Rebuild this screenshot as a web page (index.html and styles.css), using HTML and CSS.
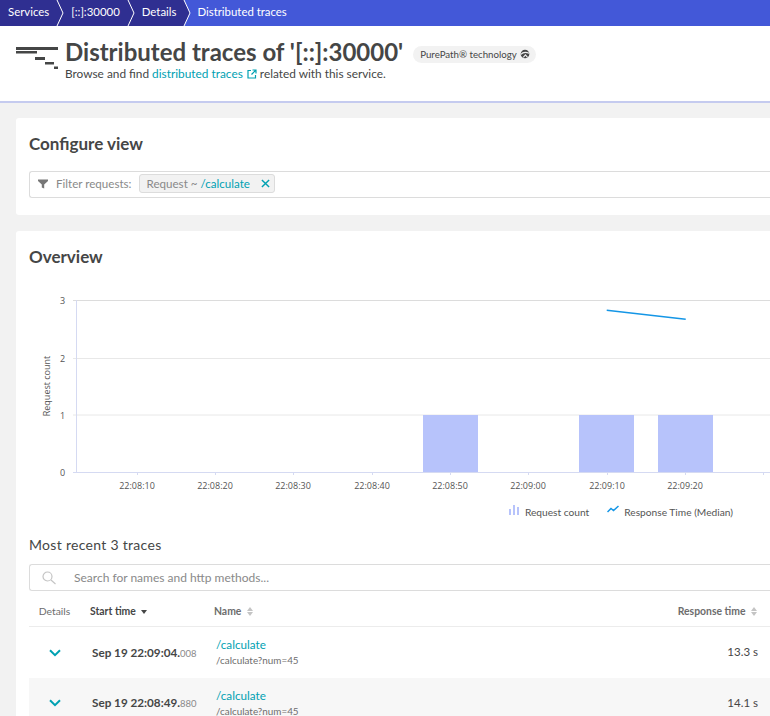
FILE: index.html
```html
<!DOCTYPE html>
<html lang="en">
<head>
    <meta charset="UTF-8">
    <title>Distributed traces</title>
    <link rel="stylesheet" href="styles.css">
</head>
<body>
<nav class="crumbs">
    <a class="crumb">Services</a>
    <svg class="crumb-sep" viewBox="0 0 14 26"><path d="M4 0 L10 13 L4 26" /></svg>
    <a class="crumb">[::]:30000</a>
    <svg class="crumb-sep" viewBox="0 0 14 26"><path d="M4 0 L10 13 L4 26" /></svg>
    <a class="crumb">Details</a>
    <svg class="crumb-sep crumb-sep-last" viewBox="0 0 14 26"><polygon class="crumb-fill" points="4,0 14,0 14,26 4,26 10,13" /><path d="M4 0 L10 13 L4 26" /></svg>
    <a class="crumb crumb-current">Distributed traces</a>
</nav>

<header class="page-head">
    <svg class="page-icon" viewBox="0 0 43 24">
        <rect x="0" y="1" width="42" height="3" />
        <rect x="0" y="5" width="21" height="2.5" />
        <rect x="19" y="11" width="10" height="3" />
        <rect x="29" y="16" width="9" height="2.5" />
        <rect x="38" y="20.5" width="4" height="2.5" />
    </svg>
    <div class="page-titles">
        <div class="title-row">
            <h1>Distributed traces of '[::]:30000'</h1>
            <span class="pill">PurePath® technology
                <svg class="pill-icon" viewBox="0 0 12 12"><circle cx="6" cy="6" r="5.2" /><path class="pill-cut" d="M1 6.5 C3.5 3.5 7 3.5 11 5 M4 10 L6.5 7 L9 10" /></svg>
            </span>
        </div>
        <p class="subtitle">Browse and find <a class="link">distributed traces
            <svg class="ext-icon" viewBox="0 0 10 10"><path d="M4 1.5 H1 V9 H8.5 V6 M5.5 1 H9 V4.5 M9 1 L4.5 5.5" /></svg></a> related with this service.</p>
    </div>
</header>

<main class="content">
    <section class="card card-config">
        <h2>Configure view</h2>
        <div class="filter-box">
            <svg class="filter-icon" viewBox="0 0 10 10"><path d="M0 .5 H10 V2 L6.2 5.5 V9.5 L3.8 8.5 V5.5 L0 2 Z" /></svg>
            <span class="filter-label">Filter requests:</span>
            <span class="tag">Request ~ <a class="link">/calculate</a>
                <svg class="tag-x" viewBox="0 0 10 10"><path d="M1 1 L9 9 M9 1 L1 9" /></svg>
            </span>
        </div>
    </section>

    <section class="card card-overview">
        <h2>Overview</h2>
        <svg class="chart" width="741" height="204" viewBox="0 0 741 204">
            <g class="grid">
                <line x1="44" y1="10.5" x2="741" y2="10.5" class="grid-top" />
                <line x1="44" y1="68.5" x2="741" y2="68.5" />
                <line x1="44" y1="125" x2="741" y2="125" />
            </g>
            <g class="bars">
                <rect x="394" y="125" width="55" height="57" />
                <rect x="550" y="125" width="55" height="57" />
                <rect x="629" y="125" width="55" height="57" />
            </g>
            <g class="axis">
                <line x1="47.5" y1="10" x2="47.5" y2="182" />
                <line x1="44" y1="182.5" x2="741" y2="182.5" />
                <line x1="108.5" y1="182" x2="108.5" y2="185" />
                <line x1="186.5" y1="182" x2="186.5" y2="185" />
                <line x1="264.5" y1="182" x2="264.5" y2="185" />
                <line x1="343.5" y1="182" x2="343.5" y2="185" />
                <line x1="421.5" y1="182" x2="421.5" y2="185" />
                <line x1="499.5" y1="182" x2="499.5" y2="185" />
                <line x1="578.5" y1="182" x2="578.5" y2="185" />
                <line x1="656.5" y1="182" x2="656.5" y2="185" />
                <line x1="734.5" y1="182" x2="734.5" y2="185" />
            </g>
            <polyline class="trend" points="577.7,20.3 656.7,29.3" />
            <g class="y-labels">
                <text x="31" y="14">3</text>
                <text x="31" y="72">2</text>
                <text x="31" y="129">1</text>
                <text x="31" y="186">0</text>
            </g>
            <text class="y-title" transform="translate(21 96) rotate(-90)">Request count</text>
            <g class="x-labels">
                <text x="108" y="199">22:08:10</text>
                <text x="186" y="199">22:08:20</text>
                <text x="264" y="199">22:08:30</text>
                <text x="343" y="199">22:08:40</text>
                <text x="421" y="199">22:08:50</text>
                <text x="499" y="199">22:09:00</text>
                <text x="578" y="199">22:09:10</text>
                <text x="656" y="199">22:09:20</text>
            </g>
        </svg>
        <div class="legend">
            <span class="legend-item">
                <svg class="legend-icon legend-bars" viewBox="0 0 11 10"><rect x="0" y="4" width="2" height="6" /><rect x="4" y="0" width="2" height="10" /><rect x="8" y="2" width="2" height="8" /></svg>
                Request count
            </span>
            <span class="legend-item">
                <svg class="legend-icon legend-line" viewBox="0 0 12 10"><path d="M.5 7 L4 3.5 L6.5 5.5 L11.5 1" /></svg>
                Response Time (Median)
            </span>
        </div>

        <h3>Most recent 3 traces</h3>
        <div class="search-box">
            <svg class="search-icon" viewBox="0 0 14 14"><circle cx="5.5" cy="5.5" r="4.5" /><path d="M9 9 L13.5 13" /></svg>
            <span>Search for names and http methods...</span>
        </div>

        <div class="trace-table">
            <div class="trace-row trace-head">
                <span class="col-details">Details</span>
                <span class="col-start head-sorted">Start time <i class="sort-down"></i></span>
                <span class="col-name">Name <i class="sort-both"></i></span>
                <span class="col-resp">Response time <i class="sort-both"></i></span>
            </div>
            <div class="trace-row">
                <span class="col-details"><svg class="chevron" viewBox="0 0 12 8"><path d="M1 1.2 L6 6.2 L11 1.2" /></svg></span>
                <span class="col-start"><b>Sep 19 22:09:04.</b><small>008</small></span>
                <span class="col-name"><a class="link">/calculate</a><small>/calculate?num=45</small></span>
                <span class="col-resp">13.3 s</span>
            </div>
            <div class="trace-row trace-alt">
                <span class="col-details"><svg class="chevron" viewBox="0 0 12 8"><path d="M1 1.2 L6 6.2 L11 1.2" /></svg></span>
                <span class="col-start"><b>Sep 19 22:08:49.</b><small>880</small></span>
                <span class="col-name"><a class="link">/calculate</a><small>/calculate?num=45</small></span>
                <span class="col-resp">14.1 s</span>
            </div>
        </div>
    </section>
</main>
</body>
</html>
```

FILE: styles.css
```css
html, body {
    margin: 0;
    height: 716px;
    overflow: hidden;
}

body {
    font-family: 'Lato', 'Open Sans', sans-serif;
    background-color: #f2f2f2;
    color: #454646;
}

h1, h2, h3, p {
    margin: 0;
}

.link {
    color: #00a1b2;
}

/* breadcrumb */
.crumbs {
    display: flex;
    height: 26px;
    background-color: #2f2f91;
    color: #fff;
    font-size: 11.4px;
    line-height: 24px;
}

.crumb {
    padding-left: 4px;
    padding-right: 4px;
    flex: none;
}

.crumb:first-child {
    padding-left: 8px;
}

.crumb-sep {
    width: 14px;
    height: 26px;
    flex: none;
}

.crumb-sep path {
    fill: none;
    stroke: #fff;
    stroke-width: 1;
}

.crumb-fill {
    fill: #4358d8;
}

.crumb-current {
    flex: 1;
    background-color: #4358d8;
    padding-left: 3px;
}

/* page header */
.page-head {
    display: flex;
    align-items: flex-start;
    gap: 6px;
    height: 77px;
    box-sizing: border-box;
    padding: 12px 16px 0;
    background-color: #fff;
    border-bottom: 2px solid #c5cbef;
}

.page-icon {
    width: 43px;
    height: 24px;
    margin-top: 8px;
    fill: #454646;
    flex: none;
}

.title-row {
    display: flex;
    align-items: center;
    gap: 10px;
    height: 28px;
}

h1 {
    font-size: 24px;
    font-weight: 700;
    line-height: 28px;
    white-space: nowrap;
}

.pill {
    display: flex;
    align-items: center;
    gap: 3px;
    height: 17px;
    margin-top: 4px;
    padding: 0 6px 0 7px;
    background-color: #f2f2f2;
    border-radius: 9px;
    font-size: 9.7px;
    white-space: nowrap;
}

.pill-icon {
    width: 10px;
    height: 10px;
    fill: #454646;
}

.pill-cut {
    fill: none;
    stroke: #f2f2f2;
    stroke-width: 1.3;
}

.subtitle {
    font-size: 11.85px;
    line-height: 15px;
}

.ext-icon {
    width: 10px;
    height: 10px;
    margin-left: 1px;
    fill: none;
    stroke: #00a1b2;
    stroke-width: 1.2;
    vertical-align: -1px;
}

/* cards */
.content {
    padding: 15px 0 0 16px;
}

.card {
    background-color: #fff;
    padding-left: 13px;
    margin-bottom: 16px;
    border-radius: 3px 0 0 3px;
}

.card-config {
    height: 97px;
    padding-top: 16px;
    box-sizing: border-box;
}

h2 {
    font-size: 17px;
    font-weight: 700;
    line-height: 20px;
}

.filter-box, .search-box {
    display: flex;
    align-items: center;
    border: 1px solid #dcdcdc;
    border-right: none;
    border-radius: 3px 0 0 3px;
    box-sizing: border-box;
}

.filter-box {
    height: 27px;
    margin-top: 17px;
    padding-left: 8px;
    padding-bottom: 2px;
    font-size: 11.6px;
    color: #898989;
}

.filter-icon {
    width: 10px;
    height: 10px;
    fill: #777;
    margin-right: 8px;
}

.filter-label {
    margin-right: 7px;
}

.tag {
    display: flex;
    align-items: center;
    height: 19px;
    padding: 0 4px 0 7px;
    background-color: #f2f2f2;
    border: 1px solid #dcdcdc;
    border-radius: 3px;
    box-sizing: border-box;
    white-space: pre;
}

.tag-x {
    width: 9px;
    height: 9px;
    margin-left: 11px;
    fill: none;
    stroke: #00a1b2;
    stroke-width: 1.6;
}

.card-overview {
    height: 520px;
    padding-top: 16px;
    box-sizing: border-box;
}

.chart {
    display: block;
    margin-top: 23px;
}

.grid line {
    stroke: #e8e8e8;
    stroke-width: 1;
}

.grid .grid-top {
    stroke: #dcdcdc;
}

.axis line {
    stroke: #d5daf2;
    stroke-width: 1;
}

.bars rect {
    fill: #b7c3fb;
}

.trend {
    fill: none;
    stroke: #1496e6;
    stroke-width: 1.5;
}

.chart text {
    font-family: 'Open Sans', sans-serif;
    font-size: 9px;
    fill: #555;
}

.x-labels text {
    text-anchor: middle;
}

.y-title {
    text-anchor: middle;
}

.legend {
    display: flex;
    justify-content: flex-end;
    gap: 18px;
    margin-top: 10px;
    padding-right: 37px;
    font-size: 10.2px;
    line-height: 16px;
    color: #555;
}

.legend-item {
    display: flex;
    align-items: center;
    gap: 5px;
}

.legend-icon {
    width: 12px;
    height: 10px;
    margin-top: -4px;
    fill: #b7c3fb;
}

.legend-bars {
    width: 11px;
}

.legend-line {
    fill: none;
    stroke: #1496e6;
    stroke-width: 1.5;
}

h3 {
    font-size: 14px;
    font-weight: 400;
    line-height: 18px;
    margin-top: 16px;
    letter-spacing: 0.3px;
}

.search-box {
    height: 27px;
    margin-top: 10px;
    padding-left: 12px;
    font-size: 12px;
    color: #898989;
}

.search-icon {
    width: 14px;
    height: 14px;
    margin-right: 18px;
    fill: none;
    stroke: #c4c4c4;
    stroke-width: 1.2;
}

/* trace table */
.trace-row {
    display: flex;
    align-items: center;
    height: 51px;
    padding-bottom: 2px;
    box-sizing: border-box;
    font-size: 11.7px;
}

.trace-head {
    height: 36px;
    padding-top: 4px;
    padding-bottom: 0;
    border-bottom: 1px solid #ececec;
    font-size: 10.4px;
    font-weight: 700;
    color: #6d6d6d;
}

.trace-alt {
    background-color: #f7f7f7;
    padding-bottom: 3px;
}

.col-details {
    width: 51px;
    text-align: center;
    flex: none;
}

.trace-head .col-details {
    font-weight: 400;
}

.col-start {
    width: 136px;
    padding-left: 12px;
    box-sizing: border-box;
    flex: none;
}

.trace-head .col-start {
    padding-left: 10px;
    width: 134px;
}

.head-sorted {
    color: #454646;
}

.col-name {
    flex: 1;
    display: flex;
    flex-direction: column;
    gap: 3px;
}

.trace-head .col-name {
    display: block;
}

.col-name small {
    font-size: 9.9px;
    color: #6d6d6d;
}

.col-start small {
    font-size: 9.5px;
    color: #898989;
}

.col-resp {
    padding-right: 12px;
    font-size: 11.5px;
}

.trace-head .col-resp {
    padding-right: 13px;
    font-size: 10.4px;
}

.chevron {
    width: 12px;
    height: 8px;
    fill: none;
    stroke: #00a1b2;
    stroke-width: 2;
}

.sort-down {
    display: inline-block;
    margin-left: 3px;
    border-left: 3px solid transparent;
    border-right: 3px solid transparent;
    border-top: 4px solid #454646;
    vertical-align: 1px;
}

.sort-both {
    display: inline-block;
    position: relative;
    width: 6px;
    height: 9px;
    margin-left: 3px;
    vertical-align: -1px;
}

.sort-both::before, .sort-both::after {
    content: "";
    position: absolute;
    left: 0;
    border-left: 3px solid transparent;
    border-right: 3px solid transparent;
}

.sort-both::before {
    top: 0;
    border-bottom: 4px solid #c4c4c4;
}

.sort-both::after {
    bottom: 0;
    border-top: 4px solid #c4c4c4;
}
```
